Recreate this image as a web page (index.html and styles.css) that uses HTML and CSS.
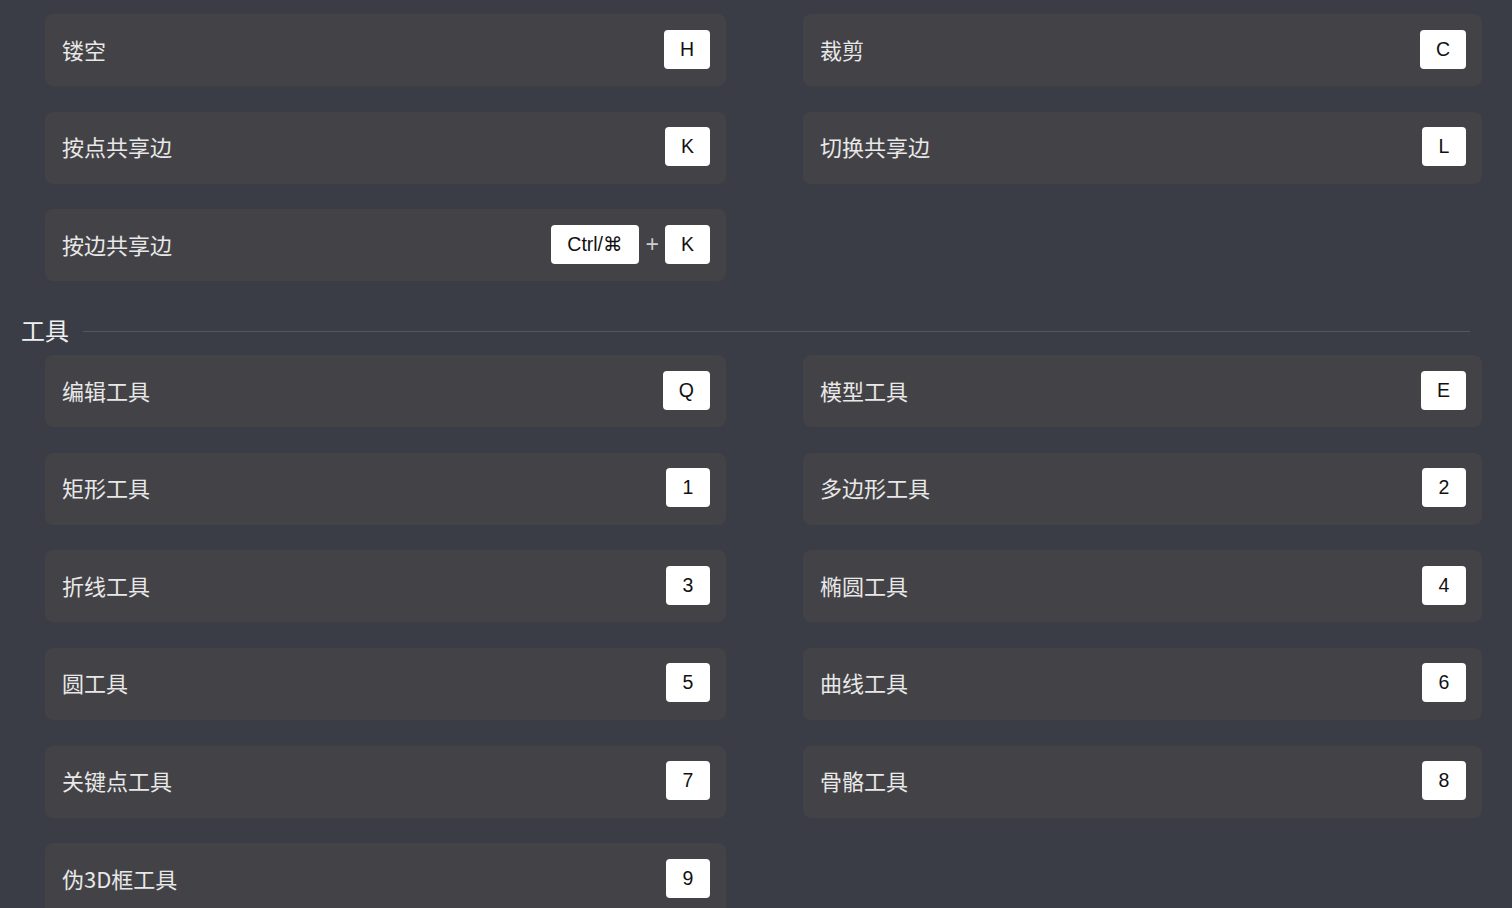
FILE: index.html
```html
<!DOCTYPE html>
<html lang="zh-CN">
<head>
    <meta charset="UTF-8">
    <title>快捷键</title>
    <link rel="stylesheet" href="styles.css">
</head>
<body>
    <div class="page">
        <div class="grid">
            <div class="card"><span class="label">镂空</span><span class="keys"><kbd>H</kbd></span></div>
            <div class="card"><span class="label">裁剪</span><span class="keys"><kbd>C</kbd></span></div>
            <div class="card"><span class="label">按点共享边</span><span class="keys"><kbd>K</kbd></span></div>
            <div class="card"><span class="label">切换共享边</span><span class="keys"><kbd>L</kbd></span></div>
            <div class="card"><span class="label">按边共享边</span><span class="keys"><kbd>Ctrl/⌘</kbd><span class="plus">+</span><kbd>K</kbd></span></div>
        </div>

        <div class="section-title">
            <span>工具</span>
            <div class="rule"></div>
        </div>

        <div class="grid">
            <div class="card"><span class="label">编辑工具</span><span class="keys"><kbd>Q</kbd></span></div>
            <div class="card"><span class="label">模型工具</span><span class="keys"><kbd>E</kbd></span></div>
            <div class="card"><span class="label">矩形工具</span><span class="keys"><kbd>1</kbd></span></div>
            <div class="card"><span class="label">多边形工具</span><span class="keys"><kbd>2</kbd></span></div>
            <div class="card"><span class="label">折线工具</span><span class="keys"><kbd>3</kbd></span></div>
            <div class="card"><span class="label">椭圆工具</span><span class="keys"><kbd>4</kbd></span></div>
            <div class="card"><span class="label">圆工具</span><span class="keys"><kbd>5</kbd></span></div>
            <div class="card"><span class="label">曲线工具</span><span class="keys"><kbd>6</kbd></span></div>
            <div class="card"><span class="label">关键点工具</span><span class="keys"><kbd>7</kbd></span></div>
            <div class="card"><span class="label">骨骼工具</span><span class="keys"><kbd>8</kbd></span></div>
            <div class="card"><span class="label">伪3D框工具</span><span class="keys"><kbd>9</kbd></span></div>
        </div>
    </div>
</body>
</html>
```

FILE: styles.css
```css
html, body {
    margin: 0;
    padding: 0;
    background: #3a3d45;
    height: 100%;
    overflow: hidden;
}
body {
    font-family: "Liberation Sans", "Noto Sans CJK SC", sans-serif;
    color: #e6e6e6;
}
.page {
    padding: 14px 0 0 21px;
}
.grid {
    display: grid;
    grid-template-columns: 681px 679px;
    column-gap: 77px;
    row-gap: 25.6px;
    margin-left: 24px;
}
.card {
    height: 72px;
    box-sizing: border-box;
    background: #434246;
    border-radius: 8px;
    padding: 0 16px 0 17px;
    display: flex;
    align-items: center;
    justify-content: space-between;
}
.label {
    font-family: "Noto Sans CJK SC", sans-serif;
    font-size: 22px;
    line-height: 1;
    margin-bottom: 3px;
    color: #e8e8e8;
}
.keys {
    display: flex;
    align-items: center;
    margin-top: -2px;
}
kbd {
    font-family: "Liberation Sans", "DejaVu Sans", sans-serif;
    font-size: 19.5px;
    color: #111;
    background: #ffffff;
    border-radius: 4px;
    height: 39px;
    min-width: 44px;
    box-sizing: border-box;
    padding: 0 16px;
    display: flex;
    align-items: center;
    justify-content: center;
}
.plus {
    color: #cfcfcf;
    font-size: 23px;
    margin: 0 6px 0 7px;
}
.section-title {
    display: flex;
    align-items: center;
    height: 48px;
    margin: 26px 0 0 0;
    width: 1449px;
}
.section-title span {
    font-family: "Noto Sans CJK SC", sans-serif;
    font-size: 24px;
    line-height: 1;
    margin-bottom: 2px;
    color: #f0f0f0;
    margin-right: 14px;
}
.rule {
    flex: 1;
    height: 1px;
    background: #56575c;
}
```
